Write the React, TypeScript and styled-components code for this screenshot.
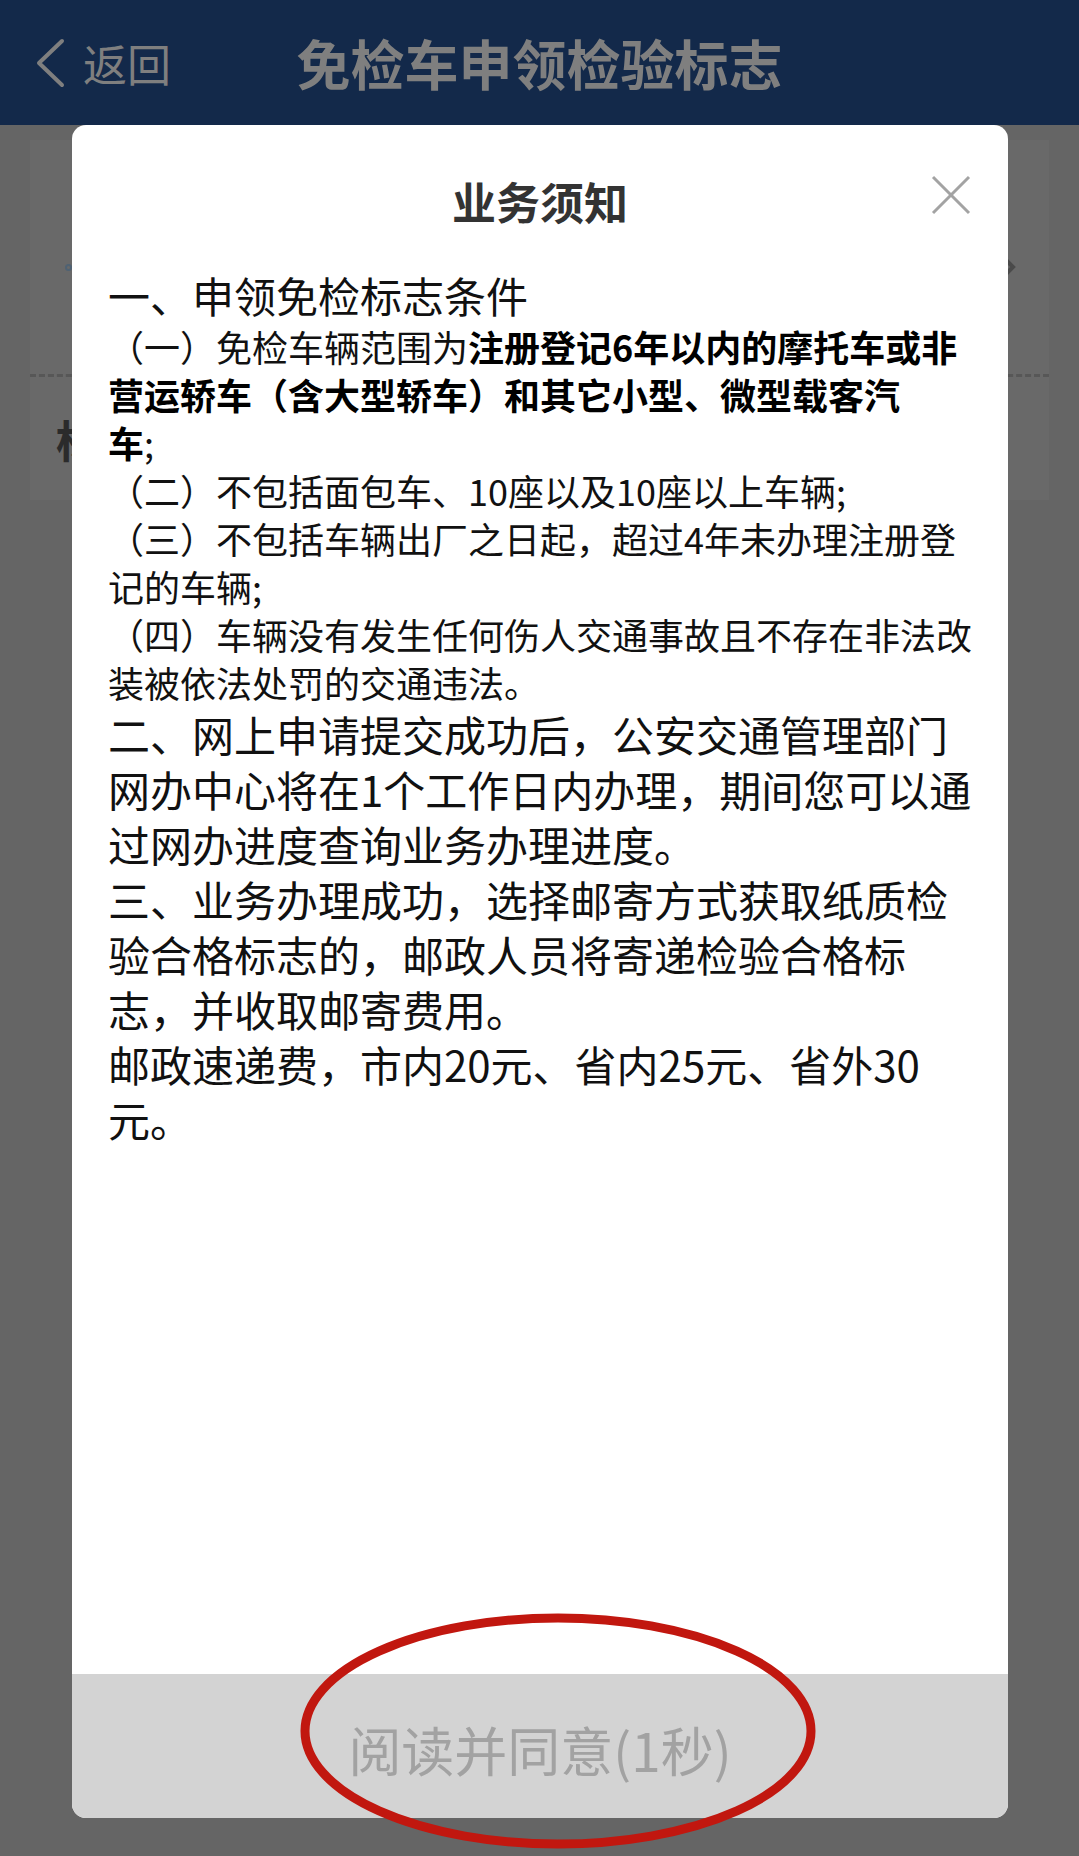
import React from "react";
import styled, { createGlobalStyle } from "styled-components";

const GlobalStyle = createGlobalStyle`
  html, body {
    margin: 0;
    padding: 0;
    background: #656565;
  }
  body {
    font-family: "Noto Sans CJK SC", "Noto Sans", sans-serif;
  }
  * { box-sizing: border-box; }
`;

const Page = styled.div`
  position: relative;
  width: 1079px;
  height: 1856px;
  overflow: hidden;
  background: #656565;
`;

const Header = styled.header`
  height: 125px;
  background: #13294a;
  display: grid;
  grid-template-columns: 1fr auto 1fr;
  align-items: center;
`;

const BackButton = styled.div`
  display: flex;
  align-items: center;
  gap: 18px;
  padding-left: 35px;
  color: #7f7f7f;
`;

const BackLabel = styled.span`
  font-size: 44px;
  line-height: 1;
  color: #7f7f7f;
`;

const HeaderTitle = styled.h1`
  margin: 0;
  font-size: 54px;
  font-weight: 700;
  line-height: 1;
  color: #7f7f7f;
  white-space: nowrap;
`;

const FormPanel = styled.section`
  margin: 15px 30px 0;
  background: #696969;
`;

const FormRow = styled.div`
  height: 234px;
  padding: 20px 32px 0 35px;
  display: flex;
  align-items: center;
  justify-content: space-between;
`;

const Dot = styled.span`
  width: 7px;
  height: 7px;
  border-radius: 50%;
  border: 2px solid #4f6273;
`;

const DashedDivider = styled.div`
  height: 0;
  border-top: 3px dashed #575757;
`;

const LabelRow = styled.div`
  height: 123px;
  padding-left: 26px;
  display: flex;
  align-items: center;
`;

const FieldLabel = styled.span`
  font-size: 44px;
  font-weight: 700;
  color: #2b2b2b;
`;

const Dialog = styled.div`
  position: absolute;
  left: 72px;
  top: 125px;
  width: 936px;
  height: 1693px;
  background: #ffffff;
  border-radius: 14px;
  overflow: hidden;
  display: flex;
  flex-direction: column;
`;

const DialogTitle = styled.h2`
  margin: 46px 0 0;
  text-align: center;
  font-size: 44px;
  line-height: 60px;
  font-weight: 700;
  color: #333333;
`;

const CloseButton = styled.div`
  position: absolute;
  top: 50px;
  right: 37px;
  width: 40px;
  height: 40px;
`;

const DialogBody = styled.div`
  flex: 1;
  margin-top: 36px;
  padding: 0 36px;
  color: #111111;
`;

const Para = styled.p<{ $size: "section" | "item" }>`
  margin: 0;
  white-space: nowrap;
  font-size: ${(p) => (p.$size === "section" ? "42px" : "36px")};
  line-height: ${(p) => (p.$size === "section" ? "55px" : "48px")};
`;

const Strong = styled.b`
  font-weight: 700;
  color: #000000;
`;

const ConfirmButton = styled.div`
  height: 144px;
  flex-shrink: 0;
  background: #d3d3d3;
  display: flex;
  align-items: center;
  justify-content: center;
  font-size: 53px;
  font-weight: 400;
  color: #a2a2a2;
  padding-top: 6px;
`;

const Annotation = styled.svg`
  position: absolute;
  left: 296px;
  top: 1610px;
  width: 526px;
  height: 246px;
  overflow: visible;
`;

export default function App() {
  return (
    <>
      <GlobalStyle />
      <Page>
        <Header>
          <BackButton>
            <svg width="30" height="50" viewBox="0 0 30 50">
              <polyline
                points="27,3 4,25 27,47"
                fill="none"
                stroke="#7f7f7f"
                strokeWidth="4"
                strokeLinecap="round"
                strokeLinejoin="round"
              />
            </svg>
            <BackLabel>返回</BackLabel>
          </BackButton>
          <HeaderTitle>免检车申领检验标志</HeaderTitle>
          <div />
        </Header>

        <FormPanel>
          <FormRow>
            <Dot />
            <svg width="18" height="26" viewBox="0 0 18 26">
              <polyline
                points="4,3 14,13 4,23"
                fill="none"
                stroke="#4a4a4a"
                strokeWidth="4"
              />
            </svg>
          </FormRow>
          <DashedDivider />
          <LabelRow>
            <FieldLabel>标</FieldLabel>
          </LabelRow>
        </FormPanel>

        <Dialog>
          <DialogTitle>业务须知</DialogTitle>
          <CloseButton>
            <svg width="40" height="40" viewBox="0 0 40 40">
              <line x1="2" y1="2" x2="38" y2="38" stroke="#a3a3a3" strokeWidth="3" />
              <line x1="38" y1="2" x2="2" y2="38" stroke="#a3a3a3" strokeWidth="3" />
            </svg>
          </CloseButton>
          <DialogBody>
            <Para $size="section">一、申领免检标志条件</Para>
            <Para $size="item">
              （一）免检车辆范围为<Strong>注册登记6年以内的摩托车或非</Strong>
              <br />
              <Strong>营运轿车（含大型轿车）和其它小型、微型载客汽</Strong>
              <br />
              <Strong>车</Strong>;
            </Para>
            <Para $size="item">（二）不包括面包车、10座以及10座以上车辆;</Para>
            <Para $size="item">
              （三）不包括车辆出厂之日起，超过4年未办理注册登
              <br />
              记的车辆;
            </Para>
            <Para $size="item">
              （四）车辆没有发生任何伤人交通事故且不存在非法改
              <br />
              装被依法处罚的交通违法。
            </Para>
            <Para $size="section">
              二、网上申请提交成功后，公安交通管理部门
              <br />
              网办中心将在1个工作日内办理，期间您可以通
              <br />
              过网办进度查询业务办理进度。
            </Para>
            <Para $size="section">
              三、业务办理成功，选择邮寄方式获取纸质检
              <br />
              验合格标志的，邮政人员将寄递检验合格标
              <br />
              志，并收取邮寄费用。
            </Para>
            <Para $size="section">
              邮政速递费，市内20元、省内25元、省外30
              <br />
              元。
            </Para>
          </DialogBody>
          <ConfirmButton>阅读并同意(1秒)</ConfirmButton>
        </Dialog>

        <Annotation viewBox="0 0 526 246">
          <ellipse
            cx="262"
            cy="121"
            rx="253"
            ry="113"
            fill="none"
            stroke="#c1170f"
            strokeWidth="9"
          />
        </Annotation>
      </Page>
    </>
  );
}
